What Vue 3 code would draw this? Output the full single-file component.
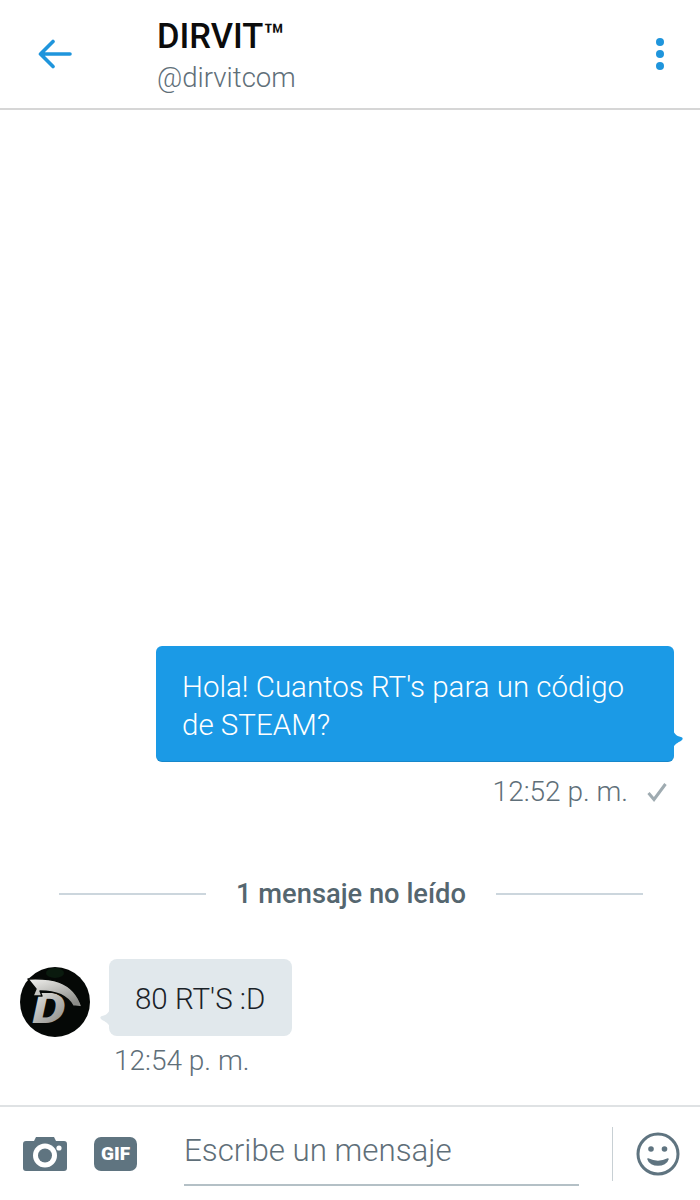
<template>
  <div class="screen">
    <header class="topbar">
      <button class="back">
        <svg width="36" height="30" viewBox="0 0 36 30">
          <path d="M33 15H4M16 2.5 3.5 15 16 27.5" fill="none" stroke="#1f95dc" stroke-width="3.6" stroke-linecap="round" stroke-linejoin="round" />
        </svg>
      </button>
      <div class="who">
        <div class="name">DIRVIT™</div>
        <div class="handle">@dirvitcom</div>
      </div>
      <div class="dots">
        <span></span><span></span><span></span>
      </div>
    </header>

    <main class="thread">
      <div class="out">
        <div class="bubble-out">
          Hola! Cuantos RT's para un código de STEAM?
          <svg class="tail-out" width="10" height="18" viewBox="0 0 10 18">
            <path d="M0 0C1 3 3 6 8 7c2 .5 2 2 1 3C7 12 2 13 0 18Z" fill="#1b9ae6" />
          </svg>
        </div>
        <div class="meta-out">
          <span>12:52 p. m.</span>
          <svg width="20" height="20" viewBox="0 0 20 20">
            <path d="M1.5 11 7 17.5 18.5 2" fill="none" stroke="#9fabb1" stroke-width="3" />
          </svg>
        </div>
      </div>

      <div class="unread">
        <span class="rule"></span>
        <span class="unread-text">1 mensaje no leído</span>
        <span class="rule"></span>
      </div>

      <div class="in">
        <div class="in-row">
          <svg class="avatar" width="70" height="70" viewBox="0 0 70 70">
            <defs>
              <linearGradient id="silver" x1="0" y1="0" x2="0.6" y2="1">
                <stop offset="0" stop-color="#f2f2ef" />
                <stop offset="1" stop-color="#8c8c88" />
              </linearGradient>
            </defs>
            <circle cx="35" cy="35" r="35" fill="#050806" />
            <ellipse cx="35" cy="6" rx="9" ry="5" fill="#0a1a0e" />
            <text x="10" y="56" class="avatar-d" fill="url(#silver)" transform="scale(1.25 1)">D</text>
            <path d="M8 12C28 11 53 12 62 40L53 39C47 28 34 24 20 24L22 29 13 29 16 22Z" fill="url(#silver)" stroke="#050806" stroke-width="1.4" stroke-linejoin="round" />
          </svg>
          <div class="bubble-in">
            <svg class="tail-in" width="10" height="18" viewBox="0 0 10 18">
              <path d="M10 0C9 3 7 6 2 7c-2 .5-2 2-1 3 2 2 7 3 9 8Z" fill="#e1e8ec" />
            </svg>
            80 RT'S :D
          </div>
        </div>
        <div class="meta-in">12:54 p. m.</div>
      </div>
    </main>

    <footer class="composer">
      <svg class="camera" width="44" height="34" viewBox="0 0 44 34">
        <path d="M3 4h8l2-4h18l2 4h8a3 3 0 0 1 3 3v24a3 3 0 0 1-3 3H3a3 3 0 0 1-3-3V7a3 3 0 0 1 3-3Z" fill="#5f7480" />
        <circle cx="22" cy="18.5" r="12" fill="#fff" />
        <circle cx="22" cy="18.5" r="7" fill="#5f7480" />
        <circle cx="36" cy="11" r="2.6" fill="#fff" />
      </svg>
      <div class="gif">GIF</div>
      <div class="input">Escribe un mensaje</div>
      <span class="divider"></span>
      <svg width="44" height="44" viewBox="0 0 44 44">
        <circle cx="22" cy="22" r="20" fill="none" stroke="#5f7480" stroke-width="3" />
        <circle cx="15" cy="17" r="2.8" fill="#5f7480" />
        <circle cx="28.5" cy="17" r="2.8" fill="#5f7480" />
        <path d="M12 27c6 3 14 3 20 0-2 8-18 8-20 0Z" fill="#5f7480" stroke="#5f7480" stroke-width="1.5" stroke-linejoin="round" />
      </svg>
    </footer>
  </div>
</template>

<script setup>
</script>

<style>
body {
  background: #fff;
}
</style>

<style scoped>
.screen {
  width: 700px;
  height: 1200px;
  display: flex;
  flex-direction: column;
  overflow: hidden;
  font-family: Roboto, "Liberation Sans", sans-serif;
  background: #fff;
}
.topbar {
  height: 110px;
  flex: none;
  box-sizing: border-box;
  display: flex;
  align-items: center;
  padding: 0 36px 0 37px;
  border-bottom: 2px solid #d6d6d6;
}
.back {
  border: 0;
  background: none;
  padding: 0;
  width: 120px;
  height: 30px;
  text-align: left;
}
.who {
  flex: 1;
  padding-top: 3px;
}
.name {
  font-size: 34.5px;
  line-height: 40px;
  font-weight: 500;
  color: #0c0c0c;
}
.handle {
  margin-top: 4px;
  font-size: 27.6px;
  line-height: 36px;
  font-weight: 300;
  color: #5f6f79;
}
.dots {
  display: flex;
  flex-direction: column;
  gap: 4px;
}
.dots span {
  width: 8px;
  height: 8px;
  border-radius: 50%;
  background: #1f95dc;
}
.thread {
  flex: 1;
  display: flex;
  flex-direction: column;
  justify-content: flex-end;
  padding-bottom: 26px;
}
.out {
  display: flex;
  flex-direction: column;
  align-items: flex-end;
  padding-right: 26px;
}
.bubble-out {
  position: relative;
  width: 518px;
  box-sizing: border-box;
  padding: 22px 26px 18px;
  background: #1b9ae6;
  border-radius: 6px;
  box-shadow: inset 0 -1px 0 rgba(0, 0, 0, 0.12);
  color: #fff;
  font-size: 29.5px;
  font-weight: 300;
  line-height: 38px;
}
.tail-out {
  position: absolute;
  left: 100%;
  bottom: 14px;
  margin-left: -1px;
}
.meta-out {
  display: flex;
  align-items: center;
  gap: 19px;
  margin: 12px 7px 0 0;
  font-size: 28px;
  font-weight: 300;
  line-height: 36px;
  color: #5f6f79;
}
.unread {
  display: flex;
  align-items: center;
  gap: 30px;
  margin-top: 68px;
  padding-left: 59px;
}
.rule {
  width: 147px;
  height: 2px;
  background: #ccd6dd;
}
.unread-text {
  font-size: 27.3px;
  line-height: 32px;
  font-weight: 500;
  color: #55666f;
}
.in {
  margin-top: 49px;
  padding-left: 20px;
}
.in-row {
  display: flex;
  align-items: flex-start;
  gap: 19px;
}
.avatar {
  margin-top: 8px;
  flex: none;
}
.avatar-d {
  font-size: 42px;
  font-weight: 900;
  font-style: italic;
  font-family: Roboto, sans-serif;
}
.bubble-in {
  position: relative;
  padding: 21px 27px 18px 26px;
  background: #e1e8ec;
  border-radius: 8px;
  color: #1a2228;
  font-size: 29.5px;
  font-weight: 300;
  line-height: 38px;
}
.tail-in {
  position: absolute;
  right: 100%;
  bottom: 9px;
  margin-right: -1px;
}
.meta-in {
  margin: 6px 0 0 94px;
  font-size: 28px;
  font-weight: 300;
  line-height: 36px;
  color: #5f6f79;
}
.composer {
  height: 95px;
  flex: none;
  box-sizing: border-box;
  display: flex;
  align-items: center;
  border-top: 2px solid #dfe2e4;
  padding-left: 23px;
}
.camera {
  margin-top: 1px;
}
.gif {
  margin-left: 27px;
  width: 43px;
  height: 34px;
  border-radius: 7px;
  background: #5f7480;
  color: #fff;
  font-size: 19px;
  font-weight: 900;
  line-height: 34px;
  text-align: center;
}
.input {
  align-self: flex-start;
  margin-left: 47px;
  width: 395px;
  height: 79px;
  box-sizing: border-box;
  border-bottom: 2px solid #b4c0c6;
  font-size: 31.3px;
  font-weight: 300;
  line-height: 88px;
  color: #5f6f79;
}
.divider {
  width: 1px;
  height: 54px;
  margin-left: 33px;
  margin-right: 23px;
  background: #c8d0d4;
}
</style>
